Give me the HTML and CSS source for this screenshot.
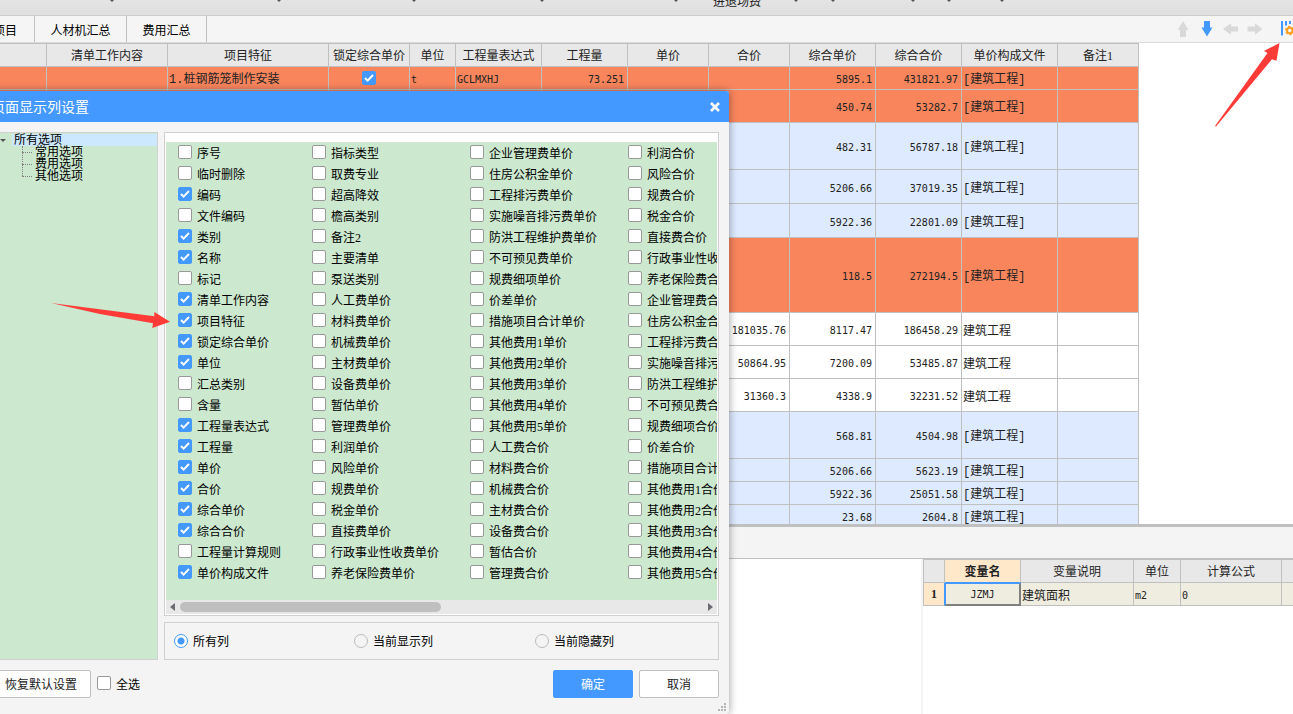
FILE: index.html
```html
<!DOCTYPE html>
<html lang="zh-CN">
<head>
<meta charset="utf-8">
<title>页面显示列设置</title>
<link rel="stylesheet" href="styles.css">
</head>
<body>
<div class="app">
  <header class="ribbon">
    <i class="caret"></i><i class="caret"></i><i class="caret"></i><i class="caret"></i><i class="caret"></i>
    <span class="ribbon-text">进退场费</span>
    <i class="caret"></i><i class="caret"></i><i class="caret"></i><i class="caret"></i><i class="caret"></i>
  </header>

  <nav class="tabs">
    <button class="tab tab-first">项目</button>
    <button class="tab tab-wide">人材机汇总</button>
    <button class="tab">费用汇总</button>
    <div class="tools">
      <button class="tool" aria-label="上移"><svg width="16" height="16" viewBox="0 0 16 16"><path fill="#d9d9d9" d="M8 0 13.500 9H11v7H5V9H2.500z"/></svg></button>
      <button class="tool" aria-label="下移"><svg width="16" height="16" viewBox="0 0 16 16"><path fill="#4399ff" d="M5 0h6v6.500h2.500L8 15.500 2.500 6.500H5z"/></svg></button>
      <button class="tool" aria-label="左移"><svg width="16" height="16" viewBox="0 0 16 16"><path fill="#d9d9d9" d="M0 8 8 2.300V5.500h7v5H8v3.200z"/></svg></button>
      <button class="tool" aria-label="右移"><svg width="16" height="16" viewBox="0 0 16 16"><path fill="#d9d9d9" d="M15.500 8 8 2.300V5.500H.5v5H8v3.200z"/></svg></button>
      <button class="tool tool-columns" aria-label="列设置"><svg width="18" height="16" viewBox="0 0 18 16"><path fill="#4399ff" d="M1 0h2v14.500H1zM5 0h2v4.500H5zM9 0h2v3H9zM13 0h2v3h-2z"/><circle cx="9.700" cy="9.500" r="2.800" fill="none" stroke="#ff9e1f" stroke-width="2"/><circle cx="9.700" cy="9.500" r="4" fill="none" stroke="#ff9e1f" stroke-width="1.500" stroke-dasharray="2.100 2.089"/></svg></button>
    </div>
  </nav>

  <main class="sheet">
    <table class="grid">
      <colgroup><col class="w47"><col class="w121"><col class="w161"><col class="w81"><col class="w46"><col class="w86"><col class="w86"><col class="w81"><col class="w81"><col class="w86"><col class="w86"><col class="w96"><col class="w81"></colgroup>
      <thead>
        <tr><th></th><th>清单工作内容</th><th>项目特征</th><th>锁定综合单价</th><th>单位</th><th>工程量表达式</th><th>工程量</th><th>单价</th><th>合价</th><th>综合单价</th><th>综合合价</th><th>单价构成文件</th><th>备注1</th></tr>
      </thead>
      <tbody>
        <tr class="h23 orange"><td></td><td></td><td class="file">1.桩钢筋笼制作安装</td><td class="mid"><input type="checkbox" class="box" aria-label="锁定综合单价" checked></td><td class="mono">t</td><td class="mono">GCLMXHJ</td><td class="num">73.251</td><td></td><td></td><td class="num">5895.1</td><td class="num">431821.97</td><td class="file">[建筑工程]</td><td></td></tr>
        <tr class="h33 orange"><td></td><td></td><td></td><td></td><td></td><td></td><td></td><td></td><td></td><td class="num">450.74</td><td class="num">53282.7</td><td class="file">[建筑工程]</td><td></td></tr>
        <tr class="h47 blue"><td></td><td></td><td></td><td></td><td></td><td></td><td></td><td></td><td></td><td class="num">482.31</td><td class="num">56787.18</td><td class="file">[建筑工程]</td><td></td></tr>
        <tr class="h34 blue"><td></td><td></td><td></td><td></td><td></td><td></td><td></td><td></td><td></td><td class="num">5206.66</td><td class="num">37019.35</td><td class="file">[建筑工程]</td><td></td></tr>
        <tr class="h34 blue"><td></td><td></td><td></td><td></td><td></td><td></td><td></td><td></td><td></td><td class="num">5922.36</td><td class="num">22801.09</td><td class="file">[建筑工程]</td><td></td></tr>
        <tr class="h75 orange"><td></td><td></td><td></td><td></td><td></td><td></td><td></td><td></td><td></td><td class="num">118.5</td><td class="num">272194.5</td><td class="file">[建筑工程]</td><td></td></tr>
        <tr class="h33"><td></td><td></td><td></td><td></td><td></td><td></td><td></td><td></td><td class="num">181035.76</td><td class="num">8117.47</td><td class="num">186458.29</td><td>建筑工程</td><td></td></tr>
        <tr class="h33"><td></td><td></td><td></td><td></td><td></td><td></td><td></td><td></td><td class="num">50864.95</td><td class="num">7200.09</td><td class="num">53485.87</td><td>建筑工程</td><td></td></tr>
        <tr class="h33"><td></td><td></td><td></td><td></td><td></td><td></td><td></td><td></td><td class="num">31360.3</td><td class="num">4338.9</td><td class="num">32231.52</td><td>建筑工程</td><td></td></tr>
        <tr class="h47 blue"><td></td><td></td><td></td><td></td><td></td><td></td><td></td><td></td><td></td><td class="num">568.81</td><td class="num">4504.98</td><td class="file">[建筑工程]</td><td></td></tr>
        <tr class="h23 blue"><td></td><td></td><td></td><td></td><td></td><td></td><td></td><td></td><td></td><td class="num">5206.66</td><td class="num">5623.19</td><td class="file">[建筑工程]</td><td></td></tr>
        <tr class="h23 blue"><td></td><td></td><td></td><td></td><td></td><td></td><td></td><td></td><td></td><td class="num">5922.36</td><td class="num">25051.58</td><td class="file">[建筑工程]</td><td></td></tr>
        <tr class="h23 blue"><td></td><td></td><td></td><td></td><td></td><td></td><td></td><td></td><td></td><td class="num">23.68</td><td class="num">2604.8</td><td class="file">[建筑工程]</td><td></td></tr>
      </tbody>
    </table>
  </main>

  <section class="lower">
    <div class="lower-bar"></div>
    <div class="lower-body">
      <div class="lower-left"></div>
      <div class="lower-right">
        <table class="grid vars">
          <colgroup><col class="w21"><col class="w76"><col class="w113"><col class="w47"><col class="w101"><col class="w96"></colgroup>
          <thead><tr><th></th><th class="picked">变量名</th><th>变量说明</th><th>单位</th><th>计算公式</th><th></th></tr></thead>
          <tbody><tr class="h23 cream"><th class="picked rownum">1</th><td class="mono active">JZMJ</td><td>建筑面积</td><td class="mono">m2</td><td class="mono">0</td><td></td></tr></tbody>
        </table>
      </div>
    </div>
  </section>
</div>

<div class="dialog" role="dialog" aria-label="页面显示列设置">
  <div class="titlebar">
    <h1>页面显示列设置</h1>
    <button class="close" aria-label="关闭"><svg width="12" height="10" viewBox="0 0 12 10"><path d="M2 1 10 9M10 1 2 9" stroke="#fff" stroke-width="2.600"/></svg></button>
  </div>
  <div class="content">
    <aside class="tree">
      <div class="node root"><i class="expander"></i><span class="selected">所有选项</span></div>
      <div class="children">
        <div class="node leaf">常用选项</div>
        <div class="node leaf">费用选项</div>
        <div class="node leaf">其他选项</div>
      </div>
    </aside>
    <div class="right">
      <div class="panel">
        <div class="options">
          <label><input type="checkbox" class="box">序号</label>
          <label><input type="checkbox" class="box">临时删除</label>
          <label><input type="checkbox" class="box" checked>编码</label>
          <label><input type="checkbox" class="box">文件编码</label>
          <label><input type="checkbox" class="box" checked>类别</label>
          <label><input type="checkbox" class="box" checked>名称</label>
          <label><input type="checkbox" class="box">标记</label>
          <label><input type="checkbox" class="box" checked>清单工作内容</label>
          <label><input type="checkbox" class="box" checked>项目特征</label>
          <label><input type="checkbox" class="box" checked>锁定综合单价</label>
          <label><input type="checkbox" class="box" checked>单位</label>
          <label><input type="checkbox" class="box">汇总类别</label>
          <label><input type="checkbox" class="box">含量</label>
          <label><input type="checkbox" class="box" checked>工程量表达式</label>
          <label><input type="checkbox" class="box" checked>工程量</label>
          <label><input type="checkbox" class="box" checked>单价</label>
          <label><input type="checkbox" class="box" checked>合价</label>
          <label><input type="checkbox" class="box" checked>综合单价</label>
          <label><input type="checkbox" class="box" checked>综合合价</label>
          <label><input type="checkbox" class="box">工程量计算规则</label>
          <label><input type="checkbox" class="box" checked>单价构成文件</label>

          <label><input type="checkbox" class="box">指标类型</label>
          <label><input type="checkbox" class="box">取费专业</label>
          <label><input type="checkbox" class="box">超高降效</label>
          <label><input type="checkbox" class="box">檐高类别</label>
          <label><input type="checkbox" class="box">备注2</label>
          <label><input type="checkbox" class="box">主要清单</label>
          <label><input type="checkbox" class="box">泵送类别</label>
          <label><input type="checkbox" class="box">人工费单价</label>
          <label><input type="checkbox" class="box">材料费单价</label>
          <label><input type="checkbox" class="box">机械费单价</label>
          <label><input type="checkbox" class="box">主材费单价</label>
          <label><input type="checkbox" class="box">设备费单价</label>
          <label><input type="checkbox" class="box">暂估单价</label>
          <label><input type="checkbox" class="box">管理费单价</label>
          <label><input type="checkbox" class="box">利润单价</label>
          <label><input type="checkbox" class="box">风险单价</label>
          <label><input type="checkbox" class="box">规费单价</label>
          <label><input type="checkbox" class="box">税金单价</label>
          <label><input type="checkbox" class="box">直接费单价</label>
          <label><input type="checkbox" class="box">行政事业性收费单价</label>
          <label><input type="checkbox" class="box">养老保险费单价</label>

          <label><input type="checkbox" class="box">企业管理费单价</label>
          <label><input type="checkbox" class="box">住房公积金单价</label>
          <label><input type="checkbox" class="box">工程排污费单价</label>
          <label><input type="checkbox" class="box">实施噪音排污费单价</label>
          <label><input type="checkbox" class="box">防洪工程维护费单价</label>
          <label><input type="checkbox" class="box">不可预见费单价</label>
          <label><input type="checkbox" class="box">规费细项单价</label>
          <label><input type="checkbox" class="box">价差单价</label>
          <label><input type="checkbox" class="box">措施项目合计单价</label>
          <label><input type="checkbox" class="box">其他费用1单价</label>
          <label><input type="checkbox" class="box">其他费用2单价</label>
          <label><input type="checkbox" class="box">其他费用3单价</label>
          <label><input type="checkbox" class="box">其他费用4单价</label>
          <label><input type="checkbox" class="box">其他费用5单价</label>
          <label><input type="checkbox" class="box">人工费合价</label>
          <label><input type="checkbox" class="box">材料费合价</label>
          <label><input type="checkbox" class="box">机械费合价</label>
          <label><input type="checkbox" class="box">主材费合价</label>
          <label><input type="checkbox" class="box">设备费合价</label>
          <label><input type="checkbox" class="box">暂估合价</label>
          <label><input type="checkbox" class="box">管理费合价</label>

          <label><input type="checkbox" class="box">利润合价</label>
          <label><input type="checkbox" class="box">风险合价</label>
          <label><input type="checkbox" class="box">规费合价</label>
          <label><input type="checkbox" class="box">税金合价</label>
          <label><input type="checkbox" class="box">直接费合价</label>
          <label><input type="checkbox" class="box">行政事业性收费合价</label>
          <label><input type="checkbox" class="box">养老保险费合价</label>
          <label><input type="checkbox" class="box">企业管理费合价</label>
          <label><input type="checkbox" class="box">住房公积金合价</label>
          <label><input type="checkbox" class="box">工程排污费合价</label>
          <label><input type="checkbox" class="box">实施噪音排污费合价</label>
          <label><input type="checkbox" class="box">防洪工程维护费合价</label>
          <label><input type="checkbox" class="box">不可预见费合价</label>
          <label><input type="checkbox" class="box">规费细项合价</label>
          <label><input type="checkbox" class="box">价差合价</label>
          <label><input type="checkbox" class="box">措施项目合计合价</label>
          <label><input type="checkbox" class="box">其他费用1合价</label>
          <label><input type="checkbox" class="box">其他费用2合价</label>
          <label><input type="checkbox" class="box">其他费用3合价</label>
          <label><input type="checkbox" class="box">其他费用4合价</label>
          <label><input type="checkbox" class="box">其他费用5合价</label>
        </div>
        <div class="scrollbar">
          <svg width="5" height="8" viewBox="0 0 5 8"><path fill="#6b6b73" d="M5 0v8L0 4z"/></svg>
          <div class="track"><div class="thumb"></div></div>
          <svg width="5" height="8" viewBox="0 0 5 8"><path fill="#6b6b73" d="M0 0v8l5-4z"/></svg>
        </div>
      </div>
      <div class="modes">
        <label><input type="radio" name="mode" class="radio" checked>所有列</label>
        <label><input type="radio" name="mode" class="radio">当前显示列</label>
        <label><input type="radio" name="mode" class="radio">当前隐藏列</label>
      </div>
    </div>
  </div>
  <div class="actions">
    <button class="btn btn-reset">恢复默认设置</button>
    <label><input type="checkbox" class="box">全选</label>
    <span class="spacer"></span>
    <button class="btn primary">确定</button>
    <button class="btn">取消</button>
  </div>
  <svg class="grip" width="8" height="8" viewBox="0 0 8 8"><path fill="#b4b4b4" d="M6 0h2v2H6zM3 3h2v2H3zM6 3h2v2H6zM0 6h2v2H0zM3 6h2v2H3zM6 6h2v2H6z"/></svg>
</div>

<svg class="marks" width="1293" height="714" viewBox="0 0 1293 714" aria-hidden="true">
  <path fill="#ff3b38" d="M51 303 154.300 316.300 154.300 312 170 321.700 152.300 328 153 323.300 100 314z"/>
  <path fill="#ff3b38" d="M1279.500 43 1276.500 60.800 1272 59.300 1216 126.500 1215 126 1267.500 53 1264 51z"/>
</svg>
</body>
</html>
```
FILE: styles.css
```css
* { box-sizing: border-box; }

body {
  margin: 0;
  height: 100vh;
  overflow: hidden;
  position: relative;
  background: #fff;
  color: #000;
  font: 12px/14px "Liberation Serif", "Noto Sans CJK SC", sans-serif;
}

button, input { font: inherit; margin: 0; }
button { border: 0; padding: 0; background: none; color: inherit; }

.app {
  display: grid;
  grid-template-rows: 16px 27px minmax(0, 1fr) 190px;
  height: 100%;
}

/* ribbon */
.ribbon {
  display: grid;
  grid-template-columns: 114px 167px 135px 128px 134px 83px 37px 37px 80px 36px 53px;
  justify-items: end;
  align-items: start;
  overflow: hidden;
  background: linear-gradient(#e4e4e4, #dfdfdf);
  border-bottom: 1px solid #cdcdcd;
}
.caret {
  border: 2px solid transparent;
  border-top-color: #555;
  border-bottom: 0;
}
.ribbon-text { margin-top: -5px; color: #222; }

/* tabs */
.tabs {
  display: flex;
  background: #f5f5f5;
  border-bottom: 1px solid #d9d9d9;
  overflow: hidden;
}
.tab {
  width: 80px;
  padding-top: 3px;
  border-right: 1px solid #c0c0c0;
  white-space: nowrap;
}
.tab-wide { width: 92px; }
.tab-first { width: 35px; padding-right: 17px; direction: rtl; }
.tools {
  display: flex;
  align-items: center;
  gap: 8px;
  margin-left: auto;
  margin-right: -5px;
}
.tool { width: 16px; height: 16px; }
.tool svg, .close svg { display: block; }
.tool-columns { width: 18px; margin-left: 9px; }

/* data grids */
.sheet { overflow: hidden; }
.grid {
  table-layout: fixed;
  width: 1139px;
  border-collapse: separate;
  border-spacing: 0;
  border-top: 1px solid #c0c0c0;
  color: #222;
}
.grid th, .grid td {
  padding: 2px 1px 0;
  border-right: 1px solid #c0c0c0;
  border-bottom: 1px solid #c0c0c0;
  white-space: nowrap;
  overflow: hidden;
  text-align: left;
}
.grid td { padding-top: 4px; }
.grid thead th {
  height: 23px;
  background: #e8e8e8;
  font-weight: normal;
  text-align: center;
}
.w21 { width: 21px; } .w46 { width: 46px; } .w47 { width: 47px; }
.w76 { width: 76px; } .w81 { width: 81px; } .w86 { width: 86px; }
.w96 { width: 96px; } .w101 { width: 101px; } .w113 { width: 113px; }
.w121 { width: 121px; } .w161 { width: 161px; }
.h23 { height: 23px; } .h33 { height: 33px; } .h34 { height: 34px; }
.h47 { height: 47px; } .h75 { height: 75px; }
.orange { background: #f9855d; }
.blue { background: #deeaff; }
.cream { background: #efeddf; }
.grid .num {
  padding-right: 3px;
  text-align: right;
  font: 10px/14px "DejaVu Sans Mono", monospace;
}
.grid .mono { font: 10px/14px "DejaVu Sans Mono", monospace; }
.grid .file { font-family: "Liberation Mono", "Noto Sans CJK SC", monospace; }
.grid .mid { padding: 0; text-align: center; }
.mid .box { display: block; margin: 0 auto; }

/* lower pane */
.lower { display: flex; flex-direction: column; min-height: 0; }
.lower-bar {
  height: 35px;
  background: #f4f4f4;
  border-top: 3px solid #c0c0c0;
  border-bottom: 1px solid #c0c0c0;
}
.lower-body { display: flex; flex: 1; min-height: 0; }
.lower-left { flex: 1; border-right: 2px solid #f4f4f4; }
.lower-right { width: 370px; overflow: hidden; }
.vars { width: 455px; border-left: 1px solid #c0c0c0; }
.grid .picked { background: #ffe7ca; font-weight: bold; text-align: center; }
.grid thead .picked { border-bottom: 1px solid #4399ff; }
.grid .rownum { border-right-color: #4399ff; padding: 0; }
.grid .active {
  padding-top: 2px;
  border: 1px solid #4399ff;
  border-right: 2px solid #808080;
  border-bottom: 2px solid #808080;
  text-align: center;
}

/* dialog window */
.dialog {
  position: absolute;
  left: -17px;
  top: 91px;
  bottom: 0;
  width: 746px;
  display: flex;
  flex-direction: column;
  background: #f4f4f4;
  border-radius: 3px;
  box-shadow: 0 0 9px rgba(0, 0, 0, 0.4);
}
.titlebar {
  display: flex;
  align-items: center;
  justify-content: space-between;
  height: 31px;
  padding: 0 8px;
  background: #4399ff;
  border-radius: 3px 3px 0 0;
  color: #fff;
}
.titlebar h1 { margin: 0; padding-top: 2px; font-size: 14px; line-height: 28px; font-weight: normal; }
.content {
  display: flex;
  gap: 6px;
  height: 538px;
  padding: 10px 10px 0 0;
}
.tree {
  width: 175px;
  padding: 1px 0 0 16px;
  background: #cce8cf;
  border: 1px solid #d0d0d0;
}
.node { display: flex; align-items: center; height: 12px; line-height: 12px; }
.expander {
  width: 6px;
  margin-right: 6px;
  border: 3px solid transparent;
  border-top-color: #555;
  border-bottom: 0;
}
.selected { flex: 1; padding-left: 2px; background: #cce8ff; }
.children { position: relative; padding-left: 22px; }
.children::before {
  content: "";
  position: absolute;
  left: 22px;
  top: 0;
  height: 30px;
  border-left: 1px dotted #808080;
}
.leaf::before {
  content: "";
  width: 10px;
  margin-right: 3px;
  border-top: 1px dotted #808080;
}
.right { flex: 1; display: flex; flex-direction: column; gap: 6px; min-width: 0; }
.panel {
  flex: 1;
  display: flex;
  flex-direction: column;
  padding: 9px 1px 1px;
  background: #fff;
  border: 1px solid #d0d0d0;
}
.options {
  flex: 1;
  display: grid;
  grid-template-columns: 134px 158px 158px 158px;
  grid-template-rows: repeat(21, 21px);
  grid-auto-flow: column;
  padding-left: 12px;
  overflow: hidden;
  background: #cce8cf;
}
label {
  display: flex;
  align-items: center;
  gap: 5px;
  padding-top: 2px;
  white-space: nowrap;
}
label .box { margin-bottom: 4px; }
.box {
  appearance: none;
  width: 14px;
  height: 14px;
  flex: none;
  background: #fff;
  border: 1px solid #999;
  border-radius: 2px;
}
.box:checked {
  border-color: #4399ff;
  background: #4399ff url("data:image/svg+xml,%3Csvg xmlns='http://www.w3.org/2000/svg' viewBox='0 0 12 12'%3E%3Cpath d='M2 6l2.600 2.600L10 3' fill='none' stroke='white' stroke-width='2'/%3E%3C/svg%3E");
}
.scrollbar {
  display: flex;
  align-items: center;
  height: 14px;
  padding: 0 4px;
  background: #e8e8e8;
}
.scrollbar svg { flex: none; }
.track { flex: 1; padding: 0 5px; }
.thumb { width: 261px; height: 10px; border-radius: 5px; background: #bfbfbf; }
.modes {
  display: grid;
  grid-template-columns: 180px 181px 1fr;
  height: 38px;
  padding-left: 9px;
  border: 1px solid #d0d0d0;
}
.radio {
  appearance: none;
  width: 14px;
  height: 14px;
  margin-bottom: 2px;
  flex: none;
  border: 1px solid #bbb;
  border-radius: 50%;
}
.radio:checked {
  border-color: #4399ff;
  background: radial-gradient(circle, #4399ff 3px, #fff 4px);
}
.actions { display: flex; align-items: center; gap: 6px; padding: 10px 10px 0 0; }
.spacer { flex: 1; }
.btn {
  width: 80px;
  height: 28px;
  padding-top: 2px;
  background: #fff;
  border: 1px solid #c0c0c0;
  border-radius: 2px;
  color: #222;
}
.btn-reset { width: 108px; padding-left: 8px; }
.primary { background: #4399ff; border-color: #4399ff; color: #fff; }
.grip { position: absolute; right: 3px; bottom: 3px; }

/* pointer arrows drawn over the windows */
.marks { position: absolute; left: 0; top: 0; pointer-events: none; }
```
